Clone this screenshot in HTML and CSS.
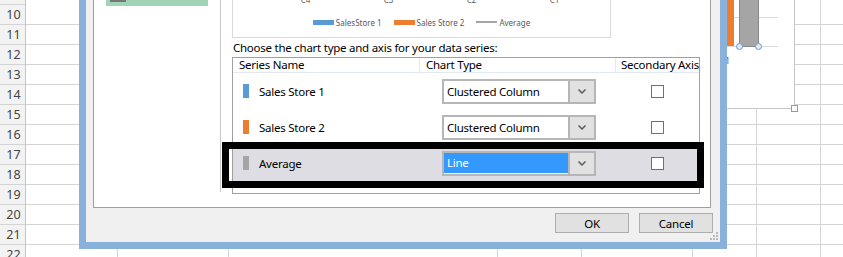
FILE: index.html
```html
<!DOCTYPE html>
<html lang="en">
<head>
    <meta charset="UTF-8">
    <title>Change Chart Type</title>
    <link rel="stylesheet" href="styles.css">
</head>
<body>
    <!-- hoja de calculo de fondo -->
    <div class="sheet">
        <div class="rowheads">
            <div class="rh first"></div>
            <div class="rh">10</div>
            <div class="rh">11</div>
            <div class="rh">12</div>
            <div class="rh">13</div>
            <div class="rh">14</div>
            <div class="rh">15</div>
            <div class="rh">16</div>
            <div class="rh">17</div>
            <div class="rh">18</div>
            <div class="rh">19</div>
            <div class="rh">20</div>
            <div class="rh">21</div>
            <div class="rh">22</div>
        </div>
        <div class="cells">
            <div class="col c1"></div>
            <div class="col c2"></div>
            <div class="col c3"></div>
            <div class="col c4"></div>
            <div class="col c5"></div>
            <div class="col c6"></div>
            <div class="col c7"></div>
        </div>
    </div>

    <!-- grafico flotante detras del dialogo -->
    <div class="chart">
        <svg width="193" height="127" viewBox="0 0 193 127">
            <line x1="0" y1="36.5" x2="177" y2="36.5" stroke="#d9d9d9"/>
            <line x1="0" y1="65.5" x2="177" y2="65.5" stroke="#d9d9d9"/>
            <rect x="114" y="0" width="19" height="65" fill="#ed7d31"/>
            <rect x="138.5" y="-1" width="19" height="66.5" fill="#a5a5a5" stroke="#8a8a8a"/>
            <circle cx="138.5" cy="65.5" r="3" fill="#dfeaf5" stroke="#6a9ccc"/>
            <circle cx="157.5" cy="65.5" r="3" fill="#dfeaf5" stroke="#6a9ccc"/>
            <text x="129" y="83" font-size="9" fill="#595959" text-anchor="end" font-family="Noto Sans, sans-serif">C1</text>
        </svg>
        <span class="handle"></span>
    </div>

    <div class="dialog">
        <div class="panel">
            <div class="types">
                <div class="type-item"><span class="type-icon"></span></div>
            </div>
            <div class="series">
                <div class="preview">
                    <div class="axis">
                        <span>C4</span><span>C3</span><span>C2</span><span>C1</span>
                    </div>
                    <div class="legend">
                        <span class="key blue"></span><span>SalesStore 1</span>
                        <span class="key orange"></span><span>Sales Store 2</span>
                        <span class="key line"></span><span>Average</span>
                    </div>
                </div>
                <div class="prompt">Choose the chart type and axis for your data series:</div>
                <div class="grid">
                    <div class="grid-head">
                        <div class="hcell">Series Name</div>
                        <div class="hcell">Chart Type</div>
                        <div class="hcell">Secondary Axis</div>
                    </div>
                    <div class="grid-row">
                        <div class="name"><span class="swatch blue"></span>Sales Store 1</div>
                        <div class="type">
                            <div class="combo">
                                <span class="value">Clustered Column</span>
                                <span class="drop"><svg width="8" height="5" viewBox="0 0 8 5"><polyline points="0.5,0.5 4,4 7.5,0.5" fill="none" stroke="#5a5a5a" stroke-width="1.5"/></svg></span>
                            </div>
                        </div>
                        <div class="axis-cell"><span class="check"></span></div>
                    </div>
                    <div class="grid-row">
                        <div class="name"><span class="swatch orange"></span>Sales Store 2</div>
                        <div class="type">
                            <div class="combo">
                                <span class="value">Clustered Column</span>
                                <span class="drop"><svg width="8" height="5" viewBox="0 0 8 5"><polyline points="0.5,0.5 4,4 7.5,0.5" fill="none" stroke="#5a5a5a" stroke-width="1.5"/></svg></span>
                            </div>
                        </div>
                        <div class="axis-cell"><span class="check"></span></div>
                    </div>
                    <div class="grid-row current">
                        <div class="name"><span class="swatch gray"></span>Average</div>
                        <div class="type">
                            <div class="combo">
                                <span class="value selected">Line</span>
                                <span class="drop"><svg width="8" height="5" viewBox="0 0 8 5"><polyline points="0.5,0.5 4,4 7.5,0.5" fill="none" stroke="#5a5a5a" stroke-width="1.5"/></svg></span>
                            </div>
                        </div>
                        <div class="axis-cell"><span class="check"></span></div>
                    </div>
                </div>
            </div>
        </div>
        <div class="buttons">
            <button class="btn">OK</button>
            <button class="btn">Cancel</button>
        </div>
        <svg class="grip" width="8" height="8" viewBox="0 0 8 8">
            <rect x="6" y="0" width="2" height="2" fill="#b9b9b9"/>
            <rect x="3" y="3" width="2" height="2" fill="#b9b9b9"/>
            <rect x="6" y="3" width="2" height="2" fill="#b9b9b9"/>
            <rect x="0" y="6" width="2" height="2" fill="#b9b9b9"/>
            <rect x="3" y="6" width="2" height="2" fill="#b9b9b9"/>
            <rect x="6" y="6" width="2" height="2" fill="#b9b9b9"/>
        </svg>
    </div>

    <!-- recuadro negro que resalta la fila -->
    <div class="callout"></div>
</body>
</html>
```

FILE: styles.css
```css
body {
    margin: 0;
    width: 843px;
    height: 257px;
    overflow: hidden;
    position: relative;
    font-family: "Noto Sans", "Open Sans", sans-serif;
    font-size: 11.5px;
    letter-spacing: -0.25px;
    color: #000;
    background: #fff;
}

/* hoja */
.sheet {
    display: flex;
    height: 257px;
}
.rowheads {
    width: 25px;
    flex: none;
    background: #f3f3f3;
    border-right: 1px solid #c4c4c4;
}
.rh {
    box-sizing: border-box;
    height: 20px;
    border-bottom: 1px solid #d4d4d4;
    text-align: center;
    line-height: 19px;
    font-size: 12.5px;
    letter-spacing: 0;
    color: #444;
    padding-left: 2px;
}
.rh.first {
    height: 5px;
}
.cells {
    flex: 1;
    display: flex;
    background: repeating-linear-gradient(to bottom, #fff 0 19px, #d4d4d4 19px 20px);
    background-position: 0 5px;
}
.col {
    box-sizing: border-box;
    border-right: 1px solid #d4d4d4;
    flex: none;
}
.c1 { width: 92px; }
.c2 { width: 111px; }
.c3 { width: 269px; }
.c4 { width: 84px; }
.c5 { width: 111px; }
.c6 { width: 64px; }
.c7 { width: 64px; }

/* grafico de excel */
.chart {
    position: absolute;
    left: 600px;
    top: -20px;
    width: 195px;
    height: 129px;
    box-sizing: border-box;
    border: 1px solid #c6c6c6;
    background: #fff;
}
.chart svg {
    display: block;
}
.handle {
    position: absolute;
    right: -4px;
    bottom: -4px;
    width: 5px;
    height: 5px;
    border: 1px solid #9a9a9a;
    background: #fff;
}

/* dialogo */
.dialog {
    position: absolute;
    left: 79px;
    top: 0;
    width: 648px;
    height: 249px;
    box-sizing: border-box;
    border: 7px solid #88b2dc;
    border-top: none;
    background: #f0f0f0;
    display: flex;
    flex-direction: column;
}
.panel {
    flex: 1;
    margin: 0 9px 0 7px;
    background: #fff;
    border: 1px solid #a0a0a0;
    border-top: none;
    display: flex;
    align-items: flex-start;
}
.types {
    width: 126px;
    height: 192px;
    flex: none;
    border-right: 1px solid #c8c8c8;
}
.type-item {
    margin-left: 12px;
    width: 102px;
    height: 6px;
    background: #9fd5b6;
}
.type-icon {
    display: block;
    margin-left: 4px;
    width: 16px;
    height: 2px;
    background: #777;
}
.series {
    margin-left: 11px;
    width: 468px;
    display: flex;
    flex-direction: column;
}
.preview {
    width: 379px;
    height: 38px;
    box-sizing: border-box;
    border: 1px solid #d9d9d9;
    border-top: none;
    overflow: hidden;
    color: #595959;
    letter-spacing: 0;
}
.axis {
    display: grid;
    grid-template-columns: repeat(4, 83px);
    padding-left: 31px;
    margin-top: -5px;
    height: 10px;
    line-height: 10px;
    font-size: 8px;
}
.axis span {
    text-align: center;
}
.legend {
    display: flex;
    justify-content: center;
    align-items: center;
    margin-top: 12px;
    height: 10px;
    font-size: 8px;
}
.key {
    width: 21px;
    height: 5px;
    margin: 0 2px 0 12px;
}
.key:first-child {
    margin-left: 0;
}
.key.blue { background: #5b9bd5; }
.key.orange { background: #ed7d31; }
.key.line {
    height: 2px;
    background: #a5a5a5;
}
.prompt {
    height: 19px;
    line-height: 19px;
    white-space: nowrap;
    padding-left: 1px;
}
.grid {
    width: 468px;
    height: 137px;
    box-sizing: border-box;
    border: 1px solid #a0a0a0;
}
.grid-head,
.grid-row {
    display: grid;
    grid-template-columns: 187px 196px 1fr;
}
.grid-head {
    height: 15px;
    box-sizing: border-box;
    border-bottom: 1px solid #e3e9f0;
}
.hcell {
    box-sizing: border-box;
    line-height: 14px;
    padding-left: 6px;
    border-right: 1px solid #e3e9f0;
    white-space: nowrap;
}
.hcell:last-child {
    border-right: none;
    padding-left: 5px;
}
.grid-row {
    height: 36px;
    align-items: center;
}
.grid-row.current {
    background: #dedde3;
}
.name {
    display: flex;
    align-items: center;
    gap: 10px;
    padding-left: 10px;
}
.swatch {
    width: 6px;
    height: 14px;
}
.swatch.blue { background: #5b9bd5; }
.swatch.orange { background: #ed7d31; }
.swatch.gray { background: #a5a5a5; }
.type {
    padding-left: 22px;
}
.combo {
    width: 154px;
    height: 25px;
    box-sizing: border-box;
    border: 2px solid #b6b6b6;
    background: #fff;
    display: flex;
}
.value {
    flex: 1;
    padding-left: 3px;
    line-height: 21px;
    white-space: nowrap;
}
.value.selected {
    background: #3399ff;
    color: #fff;
    border-bottom: 1px solid #fff;
    line-height: 20px;
}
.drop {
    width: 24px;
    border-left: 2px solid #b6b6b6;
    background: #e1e1e1;
    display: flex;
    align-items: center;
    justify-content: center;
}
.drop svg {
    display: block;
}
.axis-cell {
    display: flex;
    justify-content: center;
}
.check {
    width: 11px;
    height: 11px;
    border: 1px solid #707070;
    background: #fff;
}

/* botones */
.buttons {
    display: flex;
    justify-content: flex-end;
    gap: 10px;
    padding: 5px 7px 9px 0;
}
.btn {
    width: 74px;
    height: 20px;
    box-sizing: border-box;
    border: 1px solid #adadad;
    background: #e1e1e1;
    font-family: "Noto Sans", "Open Sans", sans-serif;
    font-size: 11.5px;
    letter-spacing: -0.25px;
    color: #000;
    padding: 0;
    line-height: 17px;
}
.grip {
    position: absolute;
    right: 2px;
    bottom: 2px;
}

/* resaltado */
.callout {
    position: absolute;
    left: 222px;
    top: 142px;
    width: 482px;
    height: 46px;
    box-sizing: border-box;
    border: 7px solid #000;
}
```
